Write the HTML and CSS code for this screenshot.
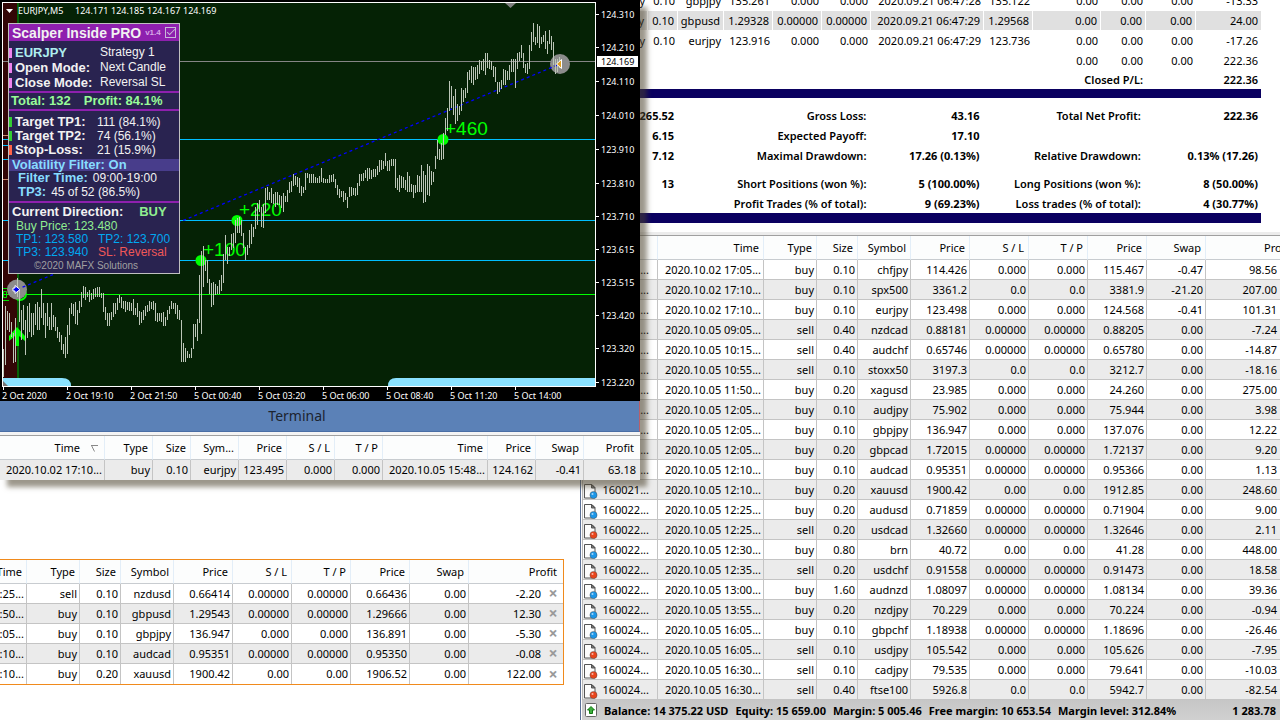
FILE: index.html
```html
<!DOCTYPE html>
<html lang="en">
<head>
<meta charset="utf-8">
<title>Terminal</title>
<link rel="stylesheet" href="styles.css">
</head>
<body>
<svg class="defs" aria-hidden="true">
  <symbol id="doc" viewBox="0 0 15 15">
    <path d="M1.5 .5h7.500l3 3v10.500h-10.500z" fill="#fcfcfc" stroke="#555" stroke-linejoin="round"/>
    <path d="M8.500 .5v3.500h3.500z" fill="#777" stroke="#555"/>
    <circle cx="10.500" cy="11" r="3.600" fill="currentColor" stroke="#444" stroke-opacity=".4"/>
    <circle cx="9.500" cy="10" r="1" fill="#fff" fill-opacity=".6"/>
  </symbol>
</svg>
<main class="desk">
  <section class="left">
    <table class="grid orders">
      <colgroup><col class="w27"><col class="w53"><col class="w41"><col class="w53"><col class="w59"><col class="w59"><col class="w59"><col class="w59"><col class="w59"><col class="w94"></colgroup>
      <thead><tr><th class="cut"><span>Time</span><th>Type<th>Size<th>Symbol<th>Price<th>S / L<th>T / P<th>Price<th>Swap<th>Profit</thead>
      <tbody>
      <tr><td class="cut"><span>:25...</span><td>sell<td>0.10<td>nzdusd<td>0.66414<td>0.00000<td>0.00000<td>0.66436<td>0.00<td>-2.20<button aria-label="Close nzdusd">×</button>
      <tr><td class="cut"><span>:50...</span><td>buy<td>0.10<td>gbpusd<td>1.29543<td>0.00000<td>0.00000<td>1.29666<td>0.00<td>12.30<button aria-label="Close gbpusd">×</button>
      <tr><td class="cut"><span>:05...</span><td>buy<td>0.10<td>gbpjpy<td>136.947<td>0.000<td>0.000<td>136.891<td>0.00<td>-5.30<button aria-label="Close gbpjpy">×</button>
      <tr><td class="cut"><span>:10...</span><td>buy<td>0.10<td>audcad<td>0.95351<td>0.00000<td>0.00000<td>0.95350<td>0.00<td>-0.08<button aria-label="Close audcad">×</button>
      <tr><td class="cut"><span>:10...</span><td>buy<td>0.20<td>xauusd<td>1900.42<td>0.00<td>0.00<td>1906.52<td>0.00<td>122.00<button aria-label="Close xauusd">×</button>
      </tbody>
    </table>
  </section>

  <section class="right">
    <div class="report">
      <table class="deals">
        <colgroup><col class="w68"><col class="w30"><col class="w46"><col class="w49"><col class="w49"><col class="w49"><col class="w113"><col class="w49"><col class="w68"><col class="w45"><col class="w50"><col class="w65"></colgroup>
        <tbody>
        <tr><td>buy<td>0.10<td>gbpjpy<td>135.261<td>0.000<td>0.000<td>2020.09.21 06:47:28<td>135.122<td>0.00<td>0.00<td>0.00<td>-13.33
        <tr class="alt"><td>buy<td>0.10<td>gbpusd<td>1.29328<td>0.00000<td>0.00000<td>2020.09.21 06:47:29<td>1.29568<td>0.00<td>0.00<td>0.00<td>24.00
        <tr><td>buy<td>0.10<td>eurjpy<td>123.916<td>0.000<td>0.000<td>2020.09.21 06:47:29<td>123.736<td>0.00<td>0.00<td>0.00<td>-17.26
        <tr><td colspan="8"><td>0.00<td>0.00<td>0.00<td>222.36
        <tr><th colspan="10">Closed P/L:<td><th>222.36
        </tbody>
      </table>
      <table class="summary">
        <colgroup><col class="w97"><col class="w192"><col class="w113"><col class="w161"><col class="w117"></colgroup>
        <tbody>
        <tr><td>265.52<th>Gross Loss:<td>43.16<th>Total Net Profit:<td>222.36
        <tr><td>6.15<th>Expected Payoff:<td>17.10<td><td>
        <tr><td>7.12<th>Maximal Drawdown:<td>17.26 (0.13%)<th>Relative Drawdown:<td>0.13% (17.26)
        </tbody>
        <tbody class="gap">
        <tr><td>13<th>Short Positions (won %):<td>5 (100.00%)<th>Long Positions (won %):<td>8 (50.00%)
        <tr><td><th>Profit Trades (% of total):<td>9 (69.23%)<th>Loss trades (% of total):<td>4 (30.77%)
        </tbody>
      </table>
    </div>

    <div class="positions">
      <table class="grid">
        <colgroup><col class="w75"><col class="w106"><col class="w53"><col class="w41"><col class="w53"><col class="w59"><col class="w59"><col class="w59"><col class="w59"><col class="w59"><col class="w75"></colgroup>
        <thead><tr><th><th>Time<th>Type<th>Size<th>Symbol<th>Price<th>S / L<th>T / P<th>Price<th>Swap<th class="profit">Profit</thead>
        <tbody>
        <tr><td>...<td>2020.10.02 17:05...<td>buy<td>0.10<td>chfjpy<td>114.426<td>0.000<td>0.000<td>115.467<td>-0.47<td>98.56
        <tr><td>...<td>2020.10.02 17:10...<td>buy<td>0.10<td>spx500<td>3361.2<td>0.0<td>0.0<td>3381.9<td>-21.20<td>207.00
        <tr><td>...<td>2020.10.02 17:10...<td>buy<td>0.10<td>eurjpy<td>123.498<td>0.000<td>0.000<td>124.568<td>-0.41<td>101.31
        <tr><td>...<td>2020.10.05 09:05...<td>sell<td>0.40<td>nzdcad<td>0.88181<td>0.00000<td>0.00000<td>0.88205<td>0.00<td>-7.24
        <tr><td>...<td>2020.10.05 10:15...<td>sell<td>0.40<td>audchf<td>0.65746<td>0.00000<td>0.00000<td>0.65780<td>0.00<td>-14.87
        <tr><td>...<td>2020.10.05 10:55...<td>sell<td>0.10<td>stoxx50<td>3197.3<td>0.0<td>0.0<td>3212.7<td>0.00<td>-18.16
        <tr><td>...<td>2020.10.05 11:50...<td>buy<td>0.20<td>xagusd<td>23.985<td>0.000<td>0.000<td>24.260<td>0.00<td>275.00
        <tr><td>...<td>2020.10.05 12:05...<td>buy<td>0.10<td>audjpy<td>75.902<td>0.000<td>0.000<td>75.944<td>0.00<td>3.98
        <tr><td>...<td>2020.10.05 12:05...<td>buy<td>0.10<td>gbpjpy<td>136.947<td>0.000<td>0.000<td>137.076<td>0.00<td>12.22
        <tr><td>...<td>2020.10.05 12:05...<td>buy<td>0.20<td>gbpcad<td>1.72015<td>0.00000<td>0.00000<td>1.72137<td>0.00<td>9.20
        <tr><td>...<td>2020.10.05 12:10...<td>buy<td>0.10<td>audcad<td>0.95351<td>0.00000<td>0.00000<td>0.95366<td>0.00<td>1.13
        <tr><td><svg class="buy"><use href="#doc"/></svg>160021...<td>2020.10.05 12:10...<td>buy<td>0.20<td>xauusd<td>1900.42<td>0.00<td>0.00<td>1912.85<td>0.00<td>248.60
        <tr><td><svg class="buy"><use href="#doc"/></svg>160022...<td>2020.10.05 12:25...<td>buy<td>0.20<td>audusd<td>0.71859<td>0.00000<td>0.00000<td>0.71904<td>0.00<td>9.00
        <tr><td><svg class="sell"><use href="#doc"/></svg>160022...<td>2020.10.05 12:25...<td>sell<td>0.20<td>usdcad<td>1.32660<td>0.00000<td>0.00000<td>1.32646<td>0.00<td>2.11
        <tr><td><svg class="buy"><use href="#doc"/></svg>160022...<td>2020.10.05 12:30...<td>buy<td>0.80<td>brn<td>40.72<td>0.00<td>0.00<td>41.28<td>0.00<td>448.00
        <tr><td><svg class="sell"><use href="#doc"/></svg>160022...<td>2020.10.05 12:35...<td>sell<td>0.20<td>usdchf<td>0.91558<td>0.00000<td>0.00000<td>0.91473<td>0.00<td>18.58
        <tr><td><svg class="buy"><use href="#doc"/></svg>160022...<td>2020.10.05 13:00...<td>buy<td>1.60<td>audnzd<td>1.08097<td>0.00000<td>0.00000<td>1.08134<td>0.00<td>39.36
        <tr><td><svg class="buy"><use href="#doc"/></svg>160022...<td>2020.10.05 13:55...<td>buy<td>0.20<td>nzdjpy<td>70.229<td>0.000<td>0.000<td>70.224<td>0.00<td>-0.94
        <tr><td><svg class="buy"><use href="#doc"/></svg>160024...<td>2020.10.05 16:05...<td>buy<td>0.10<td>gbpchf<td>1.18938<td>0.00000<td>0.00000<td>1.18696<td>0.00<td>-26.46
        <tr><td><svg class="sell"><use href="#doc"/></svg>160024...<td>2020.10.05 16:05...<td>sell<td>0.10<td>usdjpy<td>105.542<td>0.000<td>0.000<td>105.626<td>0.00<td>-7.95
        <tr><td><svg class="sell"><use href="#doc"/></svg>160024...<td>2020.10.05 16:30...<td>sell<td>0.10<td>cadjpy<td>79.535<td>0.000<td>0.000<td>79.641<td>0.00<td>-10.03
        <tr><td><svg class="sell"><use href="#doc"/></svg>160024...<td>2020.10.05 16:30...<td>sell<td>0.40<td>ftse100<td>5926.8<td>0.0<td>0.0<td>5942.7<td>0.00<td>-82.54
        </tbody>
      </table>
      <div class="status">
        <svg class="up" viewBox="0 0 12 14"><rect x=".5" y=".5" width="11" height="13" rx="1" fill="#fff" stroke="#666"/><path d="M6 3.500L9.500 7H7.500v3.500h-3V7h-2z" fill="#3fae3f" stroke="#117a11"/></svg>
        <span>Balance: 14 375.22 USD</span><span>Equity: 15 659.00</span><span>Margin: 5 005.46</span><span>Free margin: 10 653.54</span><span>Margin level: 312.84%</span>
        <span class="sum">1 283.78</span>
      </div>
    </div>
  </section>

  <section class="window">
    <div class="chart">
      <svg class="plot" viewBox="0 0 640 401">
        <rect width="640" height="401" fill="#000"/>
        <rect x="3" y="3" width="593" height="383" fill="#052205"/>
        <rect x="3" y="3" width="14" height="383" fill="#330606"/>
        <rect x="17" y="3" width="2" height="383" fill="#066006"/>
        <g fill="#8ae2ff"><path d="M3 378h59q9 0 9 8H3z"/><path d="M388 386q0-8 8-8h200v8z"/></g>
        <path d="M3 381l5 5H3z" fill="#777"/>
        <path d="M505 3h11l-5.500 5z" fill="#808080"/>
        <g shape-rendering="crispEdges" fill="none">
          <path d="M3 135.500h6M3 179.500h6" stroke="#c98a70"/>
          <path d="M3 145.500h6M3 159.500h6M3 139.500h593M3 220.500h593M3 260.500h593" stroke="#00bfff"/>
          <path d="M3 61.500h593" stroke="#858585"/>
          <path d="M3 294.500h593" stroke="#00ff00"/>
          <path d="M2.500 2V386.500H596M2 2.500H595.500V387" stroke="#fff"/>
          <path d="M3.500 387v3M67.500 387v3M131.500 387v3M195.500 387v3M259.500 387v3M323.500 387v3M387.500 387v3M451.500 387v3M515.500 387v3M596 14.500h3M596 47.500h3M596 81.500h3M596 115.500h3M596 149.500h3M596 183.500h3M596 216.500h3M596 249.500h3M596 282.500h3M596 315.500h3M596 348.500h3M596 382.500h3" stroke="#fff"/>
        </g>
        <g fill="#00ff00" font-family="Liberation Sans, Arial, sans-serif" font-size="19">
          <circle cx="201" cy="260.500" r="5.500"/><circle cx="237" cy="220.500" r="5.500"/><circle cx="443" cy="139.500" r="5.500"/>
          <text x="203" y="256">+100</text><text x="239" y="216">+220</text><text x="445" y="135">+460</text>
        </g>
        <path d="M3 288.500h6M3 300.500h6M3.500 291.500h3v6h-3z" stroke="#00dd00" fill="none"/>
        <circle cx="20" cy="294" r="6" fill="none" stroke="#00ff00" stroke-width="2"/>
        <circle cx="17" cy="289.500" r="10" fill="#8c8c8c"/>
        <circle cx="560" cy="64" r="10" fill="#8c8c8c"/>
        <path d="M17 289.500L560 64" stroke="#0000ff" stroke-width="1.300" stroke-dasharray="3 3" fill="none"/>
        <path d="M17 327l-8 9v5l6-5v10h4v-10l6 5v-5z" fill="#00ff00"/>
        <g fill="none" stroke="#bcc6b8" stroke-width="3" shape-rendering="crispEdges">
          <path transform="translate(0 270) scale(.33333)" d="M10 237V320M16 108V285M22 123V180M28 128V185M34 155V200M40 190V278M46 145V275M52 25V80M58 60V155M64 120V210M70 105V180M76 150V255M82 108V205M88 98V185M94 130V200M100 130V195M106 103V165M112 95V180M118 110V180M124 57V145M130 98V165M136 128V205M142 100V168M148 140V180M154 100V180M160 135V170M166 140V182M172 172V205M178 185V215M184 195V240M190 222V252M196 200V264M202 165V252M208 113V195M214 98V132M220 102V138M226 96V162M232 120V165M238 93V130M244 65V110M250 48V85M256 52V90M262 65V80M268 60V96M274 70V90M280 58V88M286 54V82M292 50V80M298 52V82M304 68V85M310 68V125M316 112V150M322 130V168M328 128V168M334 125V150M340 100V142M346 98V132M352 85V120M358 74V100M364 80V115M370 92V118M376 92V125M382 95V120M388 97V123M394 98V122M400 87V135M406 115V135M412 100V142M418 122V165M424 125V158M430 120V150M436 108V138M442 104V125M448 94V122M454 97V118M460 92V120M466 100V152M472 130V155M478 130V152M484 130V155M490 125V168M496 140V168M502 120V150M508 108V132M514 92V118M520 98V118M526 100V132M532 105V148M538 120V150"/>
          <path transform="translate(180) scale(.33333)" d="M4 960V1085M10 1028V1085M16 1045V1085M22 1052V1075M28 1062V1075M34 1045V1075M40 972V1048M46 972V1012M52 957V1022M58 825V970M64 752V1002M70 738V860M76 780V812M82 780V848M88 838V882M94 850V920M100 845V915M106 852V885M112 858V882M118 840V882M124 825V872M130 762V850M136 705V780M142 740V792M148 740V768M154 702V750M160 700V745M166 660V730M172 655V698M178 650V698M184 660V708M190 700V745M196 740V780M202 735V765M208 690V745M214 672V732M220 680V712M226 620V687M232 610V675M238 600V635M244 620V680M250 612V684M256 563V640M262 560V600M268 575V600M274 563V610M280 582V612M286 575V620M292 575V615M298 585V615M304 587V625M310 580V636M316 588V605M322 570V605M328 545V580M334 543V575M340 522V558M346 528V555M352 530V560M358 535V580M364 558V588M370 560V578M376 518V570M382 518V535M388 522V548M394 522V548M400 522V550M406 532V548M412 534V550M418 528V550M424 504V545M430 535V550M436 538V550M442 537V548M448 525V548M454 525V545M460 523V545M466 536V565M472 555V585M478 568V595M484 572V592M490 572V605M496 578V600M502 590V624M508 562V592M514 560V588M520 565V585M526 563V588M532 548V584M538 522V558M544 522V542M550 518V542M556 510V535M562 504V543M568 504V537M574 510V538M580 506V532M586 506V530M592 498V525M598 480V515M604 480V510M610 482V508M616 459V498M622 482V513M628 480V512M634 478V498M640 476V498M646 476V565M652 535V570M658 540V575"/>
          <path transform="translate(400) scale(.33333)" d="M4 528V563M-2 525V570M-8 534V562M-14 530V560M10 530V563M16 540V570M22 515V575M28 528V575M34 552V575M40 555V594M46 555V580M52 525V577M58 528V575M64 495V575M70 513V608M76 525V605M82 492V585M88 498V588M94 513V555M100 517V545M106 467V508M112 420V478M118 447V480M124 430V480M130 400V477M136 354V405M142 325V392M148 243V332M154 258V325M160 288V345M166 267V372M172 312V362M178 318V345M184 264V332M190 270V305M196 265V294M202 216V280M208 210V240M214 198V250M220 202V255M226 200V240M232 195V238M238 180V222M244 182V210M250 178V212M256 160V225M262 160V205M268 180V208M274 183V210M280 198V230M286 202V245M292 247V282M298 245V275M304 240V268M310 207V255M316 210V255M322 212V240M328 195V240M334 178V215M340 178V215M346 178V263M352 160V208M358 156V182M364 135V175M370 158V203M376 192V218M382 190V223M388 135V207M394 96V153M400 69V125M406 110V135M412 72V130M418 78V143M424 110V132M430 105V125M436 93V147M442 123V162M448 90V132M454 108V150M460 126V195M466 178V222M472 178V215M478 170V205"/>
        </g>
        <path d="M561.500 59.500v9l-5-4.500z" fill="#e0a020" stroke="#fff"/>
        <path d="M15 285.500l5 4-5 4v-2.500h-2v-3h2z" fill="#0000f0" stroke="#fff"/>
        <path d="M6 9h7l-3.500 4z" fill="#fff"/>
        <g fill="#fff" font-family="Noto Sans, sans-serif" font-size="9">
          <text x="18" y="14">EURJPY,M5</text><text x="75" y="14">124.171</text><text x="111" y="14">124.185</text><text x="147" y="14">124.167</text><text x="183" y="14">124.169</text>
          <text x="601" y="18">124.310</text><text x="601" y="51">124.210</text><text x="601" y="85">124.110</text><text x="601" y="119">124.010</text><text x="601" y="153">123.910</text><text x="601" y="187">123.810</text><text x="601" y="220">123.710</text><text x="601" y="253">123.615</text><text x="601" y="286">123.515</text><text x="601" y="319">123.420</text><text x="601" y="352">123.320</text><text x="601" y="386">123.220</text>
          <text x="2" y="399">2 Oct 2020</text><text x="66" y="399">2 Oct 19:10</text><text x="130" y="399">2 Oct 21:50</text><text x="194" y="399">5 Oct 00:40</text><text x="258" y="399">5 Oct 03:20</text><text x="322" y="399">5 Oct 06:00</text><text x="386" y="399">5 Oct 08:40</text><text x="450" y="399">5 Oct 11:20</text><text x="514" y="399">5 Oct 14:00</text>
          <rect x="597" y="56" width="41" height="11"/><text x="601" y="65" fill="#000">124.169</text>
        </g>
      </svg>

      <div class="panel">
        <div class="title"><b>Scalper Inside PRO</b><small>v1.4</small><input type="checkbox" checked aria-label="Show panel"></div>
        <dl class="modes">
          <dt class="aqua">EURJPY</dt><dd>Strategy 1</dd>
          <dt>Open Mode:</dt><dd>Next Candle</dd>
          <dt>Close Mode:</dt><dd>Reversal SL</dd>
        </dl>
        <div class="total"><b>Total: 132</b><b>Profit: 84.1%</b></div>
        <dl class="targets">
          <dt>Target TP1:</dt><dd>111 (84.1%)</dd>
          <dt>Target TP2:</dt><dd>74 (56.1%)</dd>
          <dt class="stop">Stop-Loss:</dt><dd>21 (15.9%)</dd>
        </dl>
        <div class="vol"><b>Volatility Filter: On</b></div>
        <div class="filter"><b>Filter Time:</b><span>09:00-19:00</span></div>
        <div class="filter"><b>TP3:</b><span>45 of 52 (86.5%)</span></div>
        <div class="dir"><b>Current Direction:</b><b class="lime">BUY</b></div>
        <div class="price lime">Buy Price: 123.480</div>
        <div class="levels"><span>TP1: 123.580</span><span>TP2: 123.700</span><span>TP3: 123.940</span><span class="red">SL: Reversal</span></div>
        <div class="copy">©2020 MAFX Solutions</div>
      </div>
    </div>
    <h1>Terminal</h1>
    <table class="grid closed">
      <colgroup><col class="w105"><col class="w48"><col class="w38"><col class="w48"><col class="w48"><col class="w48"><col class="w48"><col class="w105"><col class="w48"><col class="w48"><col class="w56"></colgroup>
      <thead><tr><th>Time<svg class="sort" viewBox="0 0 7 7"><path d="M0 .5h7M.5 .5l3 6" fill="none" stroke="#888"/></svg><th>Type<th>Size<th>Sym...<th>Price<th>S / L<th>T / P<th>Time<th>Price<th>Swap<th>Profit</thead>
      <tbody><tr><td>2020.10.02 17:10...<td>buy<td>0.10<td>eurjpy<td>123.495<td>0.000<td>0.000<td>2020.10.05 15:48...<td>124.162<td>-0.41<td>63.18</tbody>
    </table>
  </section>
</main>
</body>
</html>
```
FILE: styles.css
```css
* { box-sizing: border-box; }
body {
  margin: 0;
  background: #fff;
  color: #000;
  font: 11px/19px "Noto Sans", "Open Sans", sans-serif;
}
.defs { position: absolute; width: 0; height: 0; }
.desk {
  position: relative;
  display: grid;
  grid-template-columns: 580fr 700fr;
  min-height: 100vh;
  overflow: hidden;
}

/* column widths */
.w27 { width: 27px; } .w30 { width: 30px; } .w38 { width: 38px; } .w41 { width: 41px; }
.w45 { width: 45px; } .w46 { width: 46px; } .w48 { width: 48px; } .w49 { width: 49px; }
.w50 { width: 50px; } .w53 { width: 53px; } .w56 { width: 56px; } .w59 { width: 59px; }
.w65 { width: 65px; } .w68 { width: 68px; } .w75 { width: 75px; }
.w94 { width: 94px; } .w97 { width: 97px; } .w105 { width: 105px; } .w106 { width: 106px; }
.w113 { width: 113px; } .w117 { width: 117px; } .w161 { width: 161px; } .w192 { width: 192px; }

table { width: 100%; table-layout: fixed; border-spacing: 0; }
td, th { padding: 0; text-align: right; white-space: nowrap; font-weight: 400; }

/* trade grids */
.grid th {
  height: 24px;
  padding-right: 4px;
  background: #fcfdfd;
  border-right: 1px solid #e3eef8;
  border-bottom: 1px solid #c8ccd0;
}
.grid td {
  height: 20px;
  padding-right: 2px;
  border-right: 1px solid #c4c4c4;
  border-bottom: 1px solid #c4c4c4;
}
.grid tbody tr:nth-child(even) { background: #ebebeb; }
.grid th:last-child, .grid td:last-child { border-right: 0; }

/* open orders */
.left { display: flex; flex-direction: column; justify-content: flex-end; padding: 0 16px 35px 0; }
.orders { border: solid #f08a1c; border-width: 1px 1px 1px 0; }
.orders tbody tr:last-child td { border-bottom: 0; line-height: 18px; }
.orders th:last-child { padding-right: 6px; }
.orders .cut span { float: right; }
.orders .cut { overflow: hidden; }
.orders button {
  width: 20px;
  margin-left: 2px;
  padding: 0;
  border: 0;
  background: none;
  color: #999;
  font: bold 16px/18px "Noto Sans", sans-serif;
  vertical-align: top;
}
.orders tbody td:last-child { padding-right: 0; }

/* report */
.right { display: flex; flex-direction: column; min-width: 0; }
.report { padding-right: 19px; margin-top: -9px; }
.deals td, .deals th { height: 20px; padding-right: 3px; line-height: 18px; }
.deals tr:last-child > * { height: 18px; }
.deals .alt td {
  background: #e0e0e0;
  background-clip: padding-box;
  border-right: 1px solid #fff;
  border-bottom: 1px solid #fff;
}
.deals .alt td:last-child { border-right: 0; }
.deals th, .summary th { font-weight: 600; }
.summary td { font-weight: 700; }
.summary { border: solid #0a0060; border-width: 9px 0 10px; padding-top: 7px; }
.summary td, .summary th { height: 20px; padding-right: 3px; }
.summary .gap tr:first-child > * { height: 28px; padding-top: 8px; }

/* positions */
.positions {
  flex: 1;
  display: flex;
  flex-direction: column;
  margin-top: 9px;
  border-left: 1px solid #5a6f95;
  padding: 3px 0 0 1px;
  box-shadow: inset 0 3px #ececec;
}
.positions table { border-left: 1px solid #b8b8b8; border-top: 1px solid #a0a0a0; }
.positions td:first-child { padding-right: 8px; }
.positions td:last-child { padding-right: 4px; }
.positions .profit { overflow: hidden; padding: 0 0 0 58px; text-align: left; text-overflow: clip; }
.positions td svg { width: 15px; height: 15px; margin-right: 4px; vertical-align: middle; }
.buy { color: #1c96e8; }
.sell { color: #e8451c; }
.status {
  flex: 1;
  display: flex;
  align-items: center;
  gap: 7px;
  min-height: 20px;
  padding: 0 4px 0 3px;
  background: linear-gradient(#c6c6c6, #d0d0d0);
  font-weight: 700;
  white-space: nowrap;
}
.status .up { width: 12px; height: 14px; }
.status .sum { margin-left: auto; }

/* floating window */
.window {
  position: absolute;
  top: 0;
  left: 0;
  width: 50%;
  background: #f4f4f4;
  box-shadow: 7px 7px 5px rgba(74, 66, 44, .55);
}
.chart { position: relative; }
.plot { display: block; width: 100%; }
.window h1 {
  margin: 0 0 3px;
  padding-right: 45px;
  background: #5b81b7;
  border-bottom: 1px solid #4a6ea5;
  border-right: 1px solid #b8606a;
  color: #1c2430;
  font-size: 14px;
  font-weight: 400;
  line-height: 30px;
  text-align: center;
}
.closed { border-top: 1px solid #a0a0a0; }
.closed tbody tr { background: #ebebeb; }
.closed td { border-bottom: 0; line-height: 18px; }
.closed th:last-child { padding-right: 6px; }
.closed td:last-child { padding-right: 4px; }
.closed .sort { width: 7px; height: 7px; margin: 0 2px 0 11px; }

/* indicator panel */
.panel {
  position: absolute;
  top: 23px;
  left: 8px;
  width: 172px;
  border: 1px solid #c0c0c0;
  background: #292350;
  color: #f2f2f2;
  font: 12px/14px "Liberation Sans", Arial, sans-serif;
  white-space: nowrap;
}
.panel b, .panel dt { font-weight: 700; font-size: 13px; line-height: 10px; }
.panel dl { display: grid; margin: 0; border-bottom: 2px solid #8e20ae; }
.panel dd { margin: 0; }
.panel dt { padding-left: 3px; border-left: 3px solid #ee82ee; align-self: center; }
.title { display: flex; align-items: center; gap: 4px; height: 17px; padding: 0 3px; background: #8e20ae; }
.panel .title b { font-size: 14px; }
.title small { font-size: 8px; font-weight: 700; color: #d8a8e8; }
.title input {
  appearance: none;
  width: 11px;
  height: 11px;
  margin: 0 0 0 auto;
  border: 1px solid #c8b8d8;
}
.title input::before {
  content: "";
  display: block;
  width: 7px;
  height: 3px;
  margin: 1px;
  border: solid #c8b8d8;
  border-width: 0 0 1px 1px;
  transform: rotate(-45deg);
}
.modes { grid-template-columns: 91px auto; grid-auto-rows: 15px; padding: 4px 0 1px; }
.total { display: flex; align-items: center; gap: 13px; height: 18px; padding: 0 2px; border-bottom: 2px solid #8e20ae; color: #98fb98; }
.targets { grid-template-columns: 88px auto; grid-auto-rows: 14px; padding: 4px 0 2px; }
.panel .targets { border-bottom: 0; }
.targets dt { border-left-color: #32cd32; }
.targets .stop { border-left-color: #ff6347; }
.vol { display: flex; align-items: center; height: 12px; padding-left: 3px; background: #483d8b; color: #87dcff; }
.filter { display: flex; align-items: center; gap: 5px; height: 14px; padding-left: 9px; }
.filter b { color: #87dcff; }
.dir { display: flex; align-items: center; gap: 16px; height: 18px; margin-top: 2px; padding: 2px 3px 0; border-top: 2px solid #8e20ae; }
.price { padding-left: 7px; }
.levels { display: grid; grid-template-columns: 82px auto; padding-left: 7px; line-height: 13px; color: #00a8f0; }
.copy { padding-right: 16px; text-align: center; font-size: 10px; color: #a0a0a0; }
.aqua { color: #afeeee; }
.lime { color: #90ee90; }
.red { color: #f05858; }
```
